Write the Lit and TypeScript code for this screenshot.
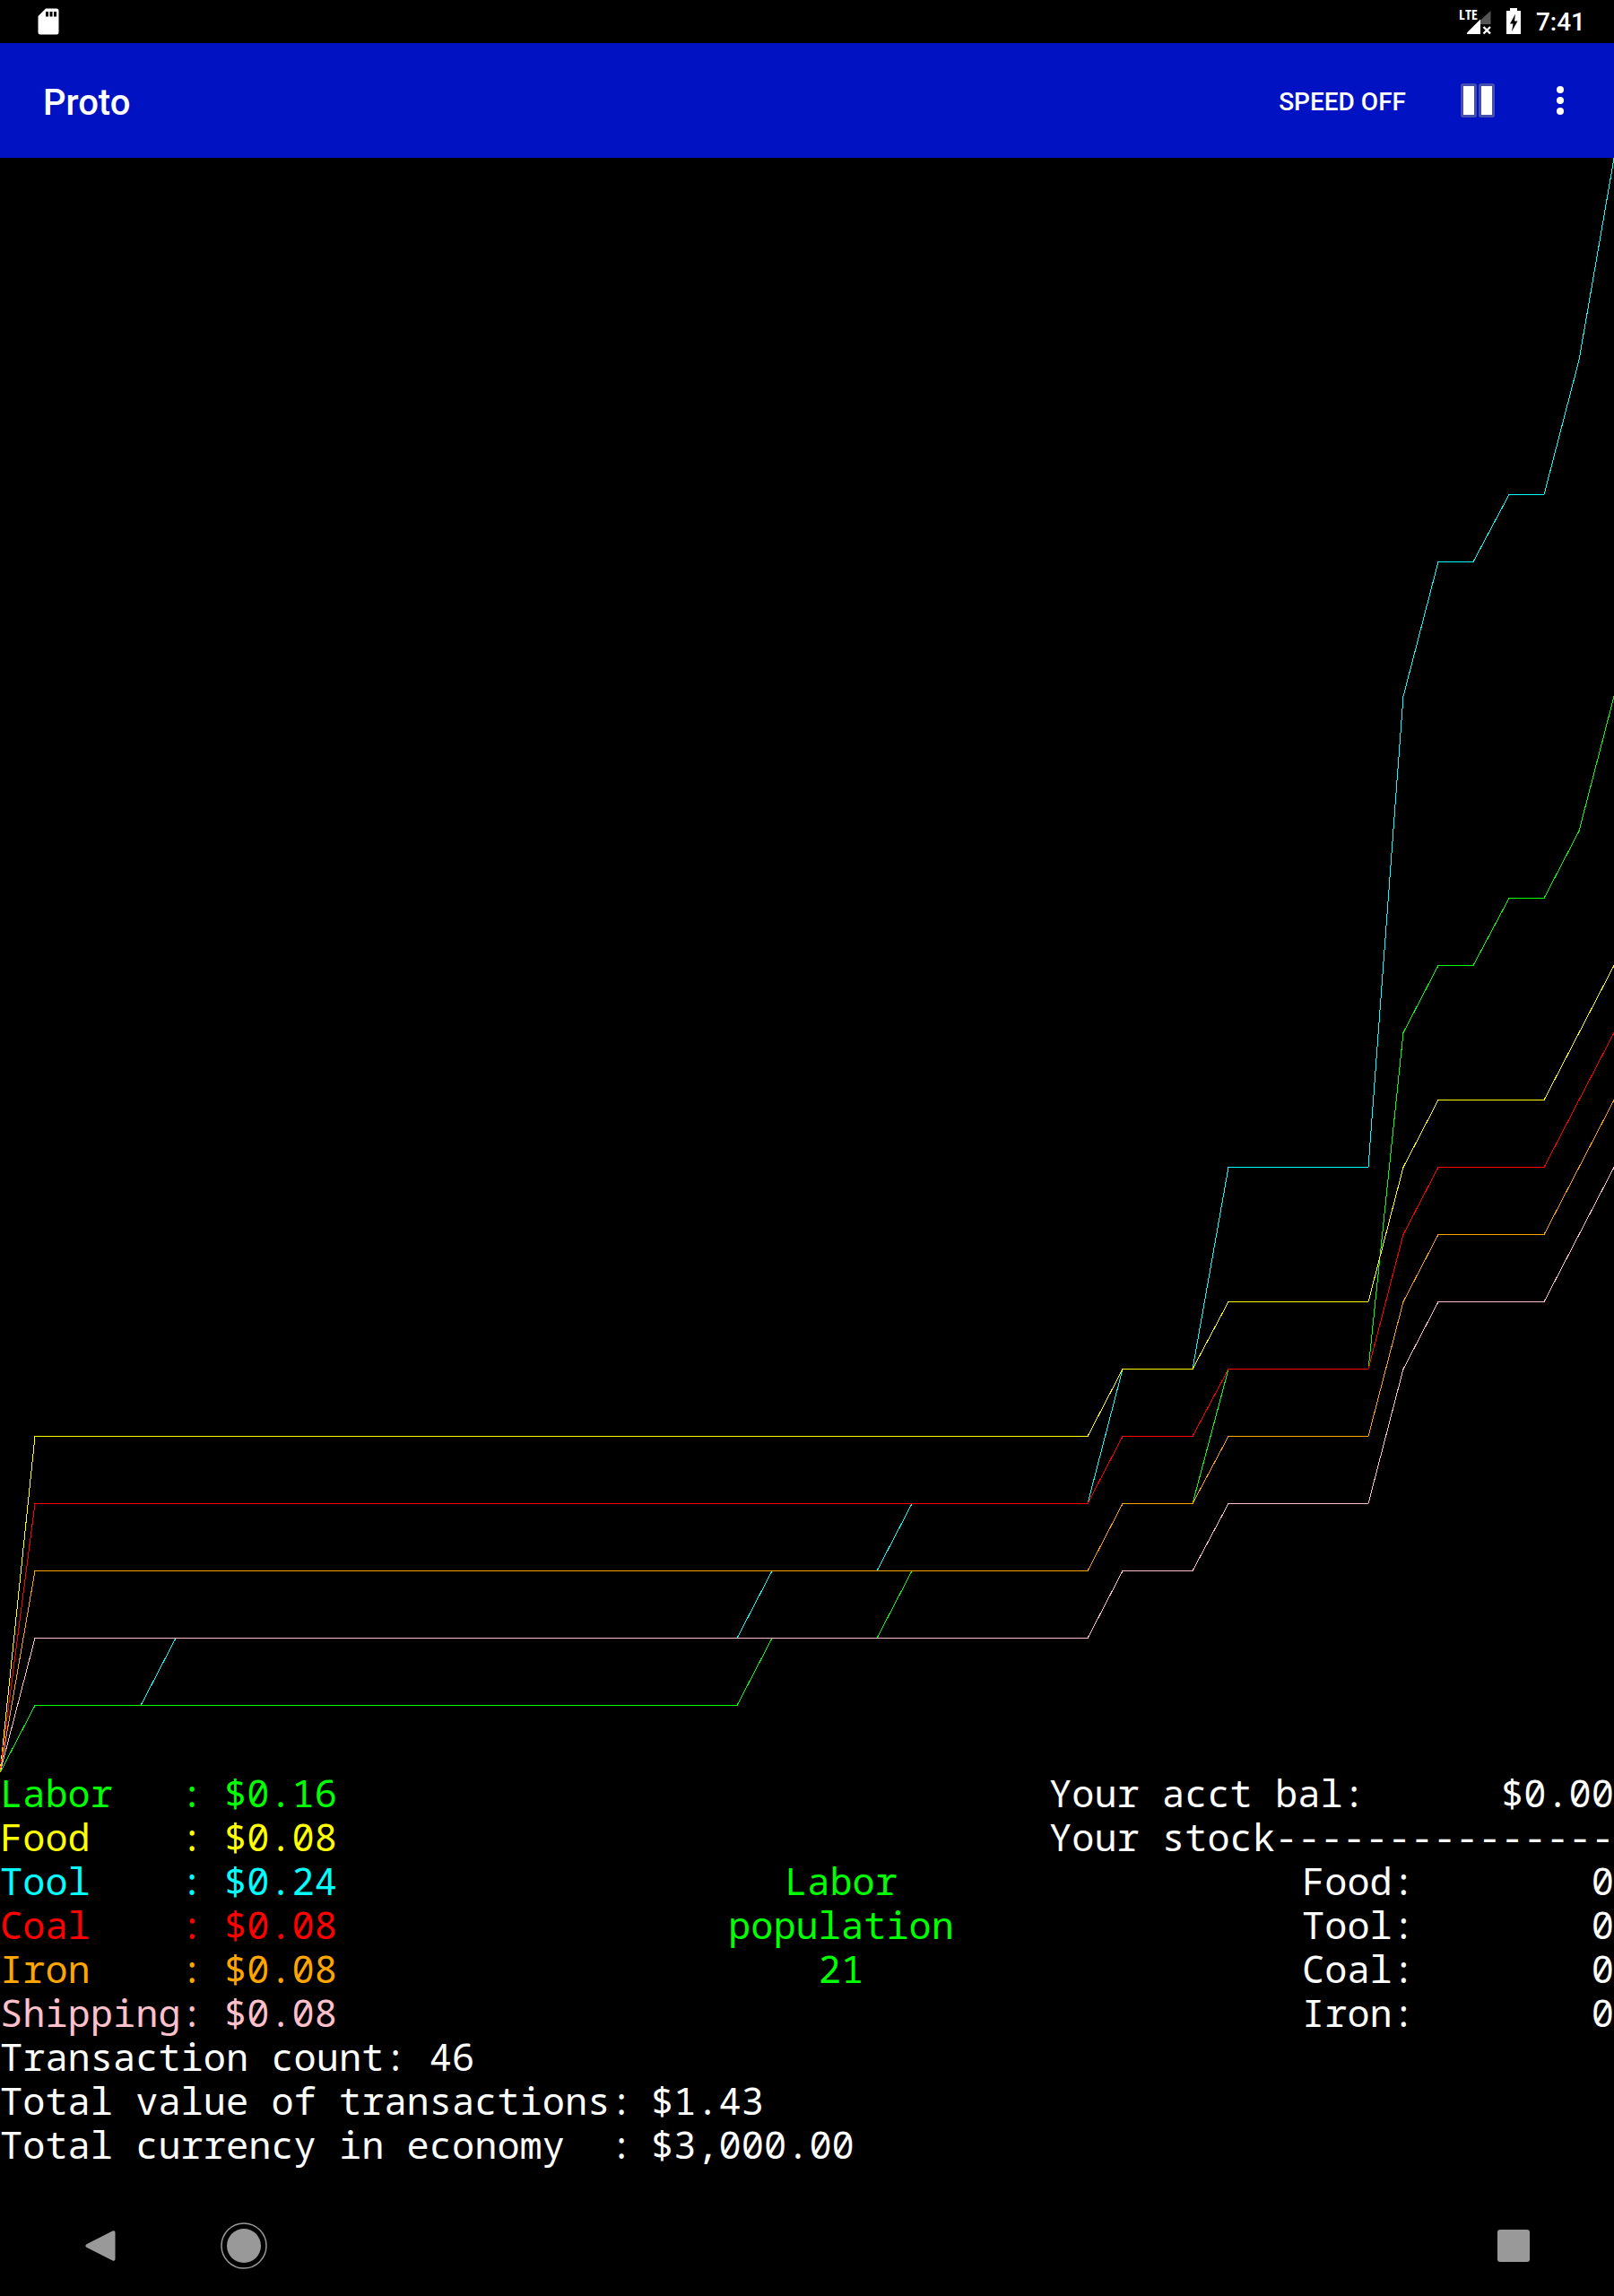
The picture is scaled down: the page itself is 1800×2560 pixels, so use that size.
import { LitElement, html, svg, css } from "lit";
import { customElement } from "lit/decorators.js";

type Run = [length: number, value: number];

interface Series {
  name: string;
  cls: string;
  runs: Run[];
}

const STEPS = 46;
const MAX_CENTS = 24;
const SIZE = 1800;

/* Price history in cents per tick, run-length encoded; later series paint on top. */
const SERIES: Series[] = [
  { name: "Tool", cls: "tool", runs: [[1, 0], [4, 1], [17, 2], [4, 3], [6, 4], [3, 6], [5, 9], [1, 16], [2, 18], [2, 19], [1, 21], [1, 24]] },
  { name: "Labor", cls: "labor", runs: [[1, 0], [21, 1], [4, 2], [6, 3], [3, 4], [5, 6], [1, 11], [2, 12], [2, 13], [1, 14], [1, 16]] },
  { name: "Shipping", cls: "shipping", runs: [[1, 0], [31, 2], [3, 3], [5, 4], [1, 6], [4, 7], [1, 8], [1, 9]] },
  { name: "Food", cls: "food", runs: [[1, 0], [31, 5], [3, 6], [5, 7], [1, 9], [4, 10], [1, 11], [1, 12]] },
  { name: "Coal", cls: "coal", runs: [[1, 0], [31, 4], [3, 5], [5, 6], [1, 8], [4, 9], [1, 10], [1, 11]] },
  { name: "Iron", cls: "iron", runs: [[1, 0], [31, 3], [3, 4], [5, 5], [1, 7], [4, 8], [1, 9], [1, 10]] },
];

const PRICES = [
  { name: "Labor", cls: "labor", price: "$0.16" },
  { name: "Food", cls: "food", price: "$0.08" },
  { name: "Tool", cls: "tool", price: "$0.24" },
  { name: "Coal", cls: "coal", price: "$0.08" },
  { name: "Iron", cls: "iron", price: "$0.08" },
  { name: "Shipping", cls: "shipping", price: "$0.08" },
];

const STOCK = ["Food", "Tool", "Coal", "Iron"];

function toPoints(runs: Run[]): string {
  const values = runs.flatMap(([length, value]) => Array<number>(length).fill(value));
  return values
    .map((value, i) => {
      const x = Math.round((i * SIZE) / STEPS);
      const y = SIZE - (value * SIZE) / MAX_CENTS + 0.5;
      return `${x},${y}`;
    })
    .join(" ");
}

@customElement("price-chart")
export class PriceChart extends LitElement {
  static styles = css`
    :host { display: block; }
    .plot { display: block; width: 100%; aspect-ratio: 1; overflow: hidden; }
    .line { fill: none; stroke-width: 1; vector-effect: non-scaling-stroke; shape-rendering: crispEdges; }
    .tool { stroke: #00ffff; }
    .labor { stroke: #00ff00; }
    .shipping { stroke: #ffc0cb; }
    .food { stroke: #ffff00; }
    .coal { stroke: #ff0000; }
    .iron { stroke: #ffa500; }
  `;

  render() {
    return html`
      <svg class="plot" viewBox="0 0 ${SIZE} ${SIZE}" role="img" aria-label="Price chart">
        ${SERIES.map((s) => svg`<polyline class="line ${s.cls}" points=${toPoints(s.runs)}></polyline>`)}
      </svg>
    `;
  }
}

@customElement("app-root")
export class AppRoot extends LitElement {
  static styles = css`
    :host {
      display: flex;
      flex-direction: column;
      min-height: 100vh;
      background: #000;
      color: #fff;
      font-family: Roboto, "Liberation Sans", sans-serif;
      font-weight: 500;
    }
    svg { display: block; }
    button {
      display: flex;
      align-items: center;
      justify-content: center;
      margin: 0;
      padding: 0;
      border: 0;
      background: none;
      color: inherit;
      font: inherit;
    }

    .status {
      display: flex;
      align-items: center;
      justify-content: space-between;
      height: 48px;
      padding: 0 32px 0 42px;
    }
    .status-right { display: flex; align-items: center; font-size: 28px; }
    .clock { padding-top: 2px; line-height: 48px; }
    .lte { font: bold 14px "Noto Sans Mono CJK JP", Roboto, sans-serif; fill: #fff; }

    .bar {
      display: flex;
      align-items: center;
      height: 128px;
      padding: 0 24px 0 48px;
      background: #0012c2;
    }
    .title { flex: 1; margin: 0; padding-top: 6px; font-size: 40px; font-weight: 500; line-height: 48px; }
    .speed { height: 96px; padding: 2px 32px 0 0; font-size: 28px; }
    .pause { width: 96px; height: 96px; }
    .more { width: 72px; height: 96px; margin-left: 8px; }

    .stats {
      margin-top: -2px;
      font-family: "Noto Sans Mono", "DejaVu Sans Mono", monospace;
      font-size: 42px;
      font-weight: 400;
      line-height: 49px;
    }
    .columns { display: grid; grid-template-columns: 44% 16% 40%; }
    .prices, .stock, .totals { margin: 0; }
    .row { display: flex; }
    .row dt, .row dd { margin: 0; white-space: pre; }
    .prices dt { width: 250px; }
    .population { margin: 0; padding: 98px 0 0 4px; text-align: center; }
    .population span { display: block; }
    .stock { justify-self: end; width: 630px; }
    .stock .row { justify-content: space-between; }
    .stock .good dt { width: 408px; text-align: right; }
    .total dt { width: 726px; }

    .tool { color: #00ffff; }
    .labor { color: #00ff00; }
    .shipping { color: #ffc0cb; }
    .food { color: #ffff00; }
    .coal { color: #ff0000; }
    .iron { color: #ffa500; }

    .nav {
      display: flex;
      align-items: center;
      height: 112px;
      margin-top: auto;
      padding: 0 32px;
      color: #999;
    }
    .nav button { width: 160px; height: 112px; }
    .nav .recent { margin-left: auto; }
  `;

  render() {
    return html`
      <header class="status">
        <svg width="24" height="32" viewBox="0 0 24 32" aria-hidden="true">
          <path fill="#fff" fill-rule="evenodd" d="M9 1.5H21A2.5 2.5 0 0 1 23.5 4V28A2.5 2.5 0 0 1 21 30.500H3A2.500 2.500 0 0 1 .5 28V10ZM9 5V10.500H12V5ZM13.500 5V10.500H16.500V5ZM18 5V10.500H21V5Z"></path>
        </svg>
        <div class="status-right">
          <svg width="86" height="48" viewBox="0 0 86 48" aria-label="LTE, battery charging" role="img">
            <path fill="#555" d="M24 22.500L35.500 12V27H24Z"></path>
            <path fill="#fff" d="M9 38V36.500L24 21.500V38Z"></path>
            <path stroke="#fff" stroke-width="2.400" d="M27.500 30L35 37.500M35 30L27.500 37.500"></path>
            <text class="lte" x="0" y="22">LTE</text>
            <path fill="#fff" fill-rule="evenodd" d="M57 9H65V12H69V38H53V12H57ZM63 15.500L57 26.500H60.500L59 35L65.500 23.500H62Z"></path>
          </svg>
          <time class="clock">7:41</time>
        </div>
      </header>

      <div class="bar">
        <h1 class="title">Proto</h1>
        <button class="speed" type="button">SPEED OFF</button>
        <button class="pause" type="button" aria-label="Pause">
          <svg width="40" height="40" viewBox="0 0 40 40" aria-hidden="true">
            <g fill="#fff" stroke="#464fae" stroke-width="3">
              <rect x="2.500" y="2.500" width="15" height="35" rx="1"></rect>
              <rect x="22.500" y="2.500" width="15" height="35" rx="1"></rect>
            </g>
          </svg>
        </button>
        <button class="more" type="button" aria-label="More options">
          <svg width="8" height="32" viewBox="0 0 8 32" aria-hidden="true" fill="#fff">
            <circle cx="4" cy="4" r="4"></circle>
            <circle cx="4" cy="16" r="4"></circle>
            <circle cx="4" cy="28" r="4"></circle>
          </svg>
        </button>
      </div>

      <price-chart></price-chart>

      <main class="stats">
        <div class="columns">
          <dl class="prices">
            ${PRICES.map((p) => html`<div class="row ${p.cls}"><dt>${p.name.padEnd(8)}:</dt><dd>${p.price}</dd></div>`)}
          </dl>
          <p class="population labor"><span>Labor</span><span>population</span><span>21</span></p>
          <dl class="stock">
            <div class="row"><dt>Your acct bal:</dt><dd>$0.00</dd></div>
            <div class="row"><dt>Your stock</dt><dd>${"-".repeat(15)}</dd></div>
            ${STOCK.map((name) => html`<div class="row good"><dt>${name}:</dt><dd>0</dd></div>`)}
          </dl>
        </div>
        <dl class="totals">
          <div class="row"><dt>Transaction count: </dt><dd>46</dd></div>
          <div class="row total"><dt>Total value of transactions:</dt><dd>$1.43</dd></div>
          <div class="row total"><dt>Total currency in economy  :</dt><dd>$3,000.00</dd></div>
        </dl>
      </main>

      <nav class="nav">
        <button type="button" aria-label="Back">
          <svg width="34" height="34" viewBox="0 0 34 34" aria-hidden="true">
            <path fill="currentColor" d="M1.500 15.200L30.500 .5Q33.500 -.5 33.500 2.500V31.500Q33.500 34.500 30.500 33.500L1.500 18.800Q-.8 17 1.500 15.200Z"></path>
          </svg>
        </button>
        <button type="button" aria-label="Home">
          <svg width="52" height="52" viewBox="0 0 52 52" aria-hidden="true">
            <circle cx="26" cy="26" r="25" fill="none" stroke="currentColor" stroke-width="1.500"></circle>
            <circle cx="26" cy="26" r="19" fill="currentColor"></circle>
          </svg>
        </button>
        <button class="recent" type="button" aria-label="Recent apps">
          <svg width="36" height="36" viewBox="0 0 36 36" aria-hidden="true">
            <rect width="36" height="36" rx="3" fill="currentColor"></rect>
          </svg>
        </button>
      </nav>
    `;
  }
}
